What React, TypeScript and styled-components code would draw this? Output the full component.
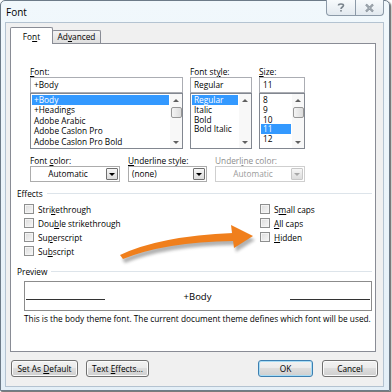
import React from 'react';
import styled, { createGlobalStyle } from 'styled-components';

const Global = createGlobalStyle`
  html, body { margin: 0; padding: 0; background: #fff; }
  body { font-family: "Open Sans", "Noto Sans", sans-serif; font-size: 8.3px; color: #000; }
  * { box-sizing: border-box; }
`;

const Stage = styled.div`
  position: relative;
  width: 392px;
  height: 392px;
  background: #fff;
  overflow: hidden;
`;

const Window = styled.div`
  width: 390px;
  height: 391px;
  border: 1px solid #6d7b88;
  border-radius: 5px 5px 0 0;
  background: linear-gradient(180deg, #f1f8fc 0%, #e4eff7 100%);
  box-shadow: 1px 1px 1px rgba(0, 0, 0, 0.45), 2px 2px 2px rgba(0, 0, 0, 0.2);
  padding: 0 5px 3px 4px;
  display: flex;
  flex-direction: column;
`;

const TitleBar = styled.div`
  height: 21px;
  display: flex;
  align-items: flex-start;
  justify-content: space-between;
`;

const Title = styled.div`
  font-size: 10px;
  line-height: 23px;
  padding-left: 1px;
`;

const Caption = styled.div`
  display: flex;
  margin-top: -1px;
  height: 16px;
  border: 1px solid #8c9aa8;
  border-top: none;
  border-radius: 0 0 4px 4px;
  overflow: hidden;
  background: linear-gradient(180deg, #f7fafc, #e2e9ef);
`;

const CapBtn = styled.div<{ $sep?: boolean }>`
  width: 28px;
  display: flex;
  align-items: center;
  justify-content: center;
  border-left: ${(p) => (p.$sep ? '1px solid #8c9aa8' : 'none')};
`;

const Client = styled.div`
  flex: 1;
  border: 1px solid #b4c3d1;
  background: #f0f0f0;
  padding: 4px 6px 0 4px;
  display: flex;
  flex-direction: column;
`;

const TabStrip = styled.div`
  display: flex;
  align-items: flex-end;
  height: 16px;
  position: relative;
  z-index: 1;
`;

const Tab = styled.div<{ $active?: boolean; $w: number }>`
  width: ${(p) => p.$w}px;
  height: ${(p) => (p.$active ? 17 : 13)}px;
  margin-bottom: ${(p) => (p.$active ? -1 : 0)}px;
  margin-left: ${(p) => (p.$active ? 0 : -1)}px;
  border: 1px solid #898c95;
  border-bottom: none;
  border-radius: 2px 2px 0 0;
  background: ${(p) => (p.$active ? '#fff' : 'linear-gradient(180deg, #f3f3f3, #dedede)')};
  text-align: center;
  line-height: ${(p) => (p.$active ? 17 : 12)}px;
`;

const Panel = styled.div`
  width: 366px;
  height: 309px;
  background: #fff;
  border: 1px solid #898c95;
  padding-top: 22px;
  display: flex;
  flex-direction: column;
`;

const Key = styled.span`
  text-decoration: underline;
  text-underline-offset: 1px;
`;

const SelectorGrid = styled.div<{ $cols: string; $gap: number; $top?: number }>`
  display: grid;
  grid-template-columns: ${(p) => p.$cols};
  column-gap: ${(p) => p.$gap}px;
  margin: ${(p) => p.$top ?? 0}px 0 0 19px;
`;

const Field = styled.div`
  display: flex;
  flex-direction: column;
`;

const Label = styled.div<{ $disabled?: boolean }>`
  height: 11px;
  line-height: 11px;
  white-space: nowrap;
  color: ${(p) => (p.$disabled ? '#8d8d8d' : '#000')};
`;

const TextBox = styled.div`
  height: 16px;
  border: 1px solid #abadb3;
  background: #fff;
  padding-left: 3px;
  line-height: 14px;
`;

const ListBox = styled.div`
  height: 56px;
  border: 1px solid #828790;
  background: #fff;
  display: flex;
`;

const Items = styled.div`
  flex: 1;
  padding: 1px 1px 0 1px;
  overflow: hidden;
`;

const Item = styled.div<{ $sel?: boolean; $h: number }>`
  height: ${(p) => p.$h}px;
  line-height: ${(p) => p.$h}px;
  padding-left: 2px;
  white-space: nowrap;
  background: ${(p) => (p.$sel ? '#3399ff' : 'transparent')};
  color: ${(p) => (p.$sel ? '#fff' : '#000')};
`;

const ScrollBar = styled.div`
  width: 12px;
  display: flex;
  flex-direction: column;
  align-items: center;
  background: #f8f8f8;
`;

const ArrowCell = styled.div`
  height: 12px;
  width: 12px;
  display: flex;
  align-items: center;
  justify-content: center;
`;

const Spacer = styled.div`
  flex: 1;
`;

const Tri = styled.span<{ $down?: boolean; $color?: string }>`
  width: 0;
  height: 0;
  border-left: 3px solid transparent;
  border-right: 3px solid transparent;
  ${(p) =>
    p.$down
      ? `border-top: 3px solid ${p.$color ?? '#606060'};`
      : `border-bottom: 3px solid ${p.$color ?? '#606060'};`}
`;

const Thumb = styled.div`
  width: 11px;
  height: 11px;
  margin-top: 1px;
  border: 1px solid #979797;
  border-radius: 2px;
  background: linear-gradient(90deg, #f4f4f4, #dcdcdc);
`;

const Combo = styled.div<{ $disabled?: boolean }>`
  height: 16px;
  border: 1px solid ${(p) => (p.$disabled ? '#cfcfcf' : '#acacac')};
  background: #fff;
  display: flex;
  color: ${(p) => (p.$disabled ? '#9a9a9a' : '#000')};
`;

const ComboText = styled.div<{ $center?: boolean }>`
  flex: 1;
  line-height: 14px;
  text-align: ${(p) => (p.$center ? 'center' : 'left')};
  padding-left: ${(p) => (p.$center ? 0 : 3)}px;
`;

const ComboBtn = styled.div<{ $disabled?: boolean }>`
  width: 12px;
  margin: 1px;
  border: 1px solid ${(p) => (p.$disabled ? '#c8c8c8' : '#707070')};
  border-radius: 1px;
  background: linear-gradient(180deg, #f6f6f6, #dcdcdc);
  display: flex;
  align-items: center;
  justify-content: center;
`;

const GroupHeader = styled.div<{ $top: number }>`
  display: flex;
  align-items: center;
  gap: 4px;
  height: 11px;
  line-height: 11px;
  margin: ${(p) => p.$top}px 3px 0 6px;
`;

const GroupLine = styled.div`
  flex: 1;
  height: 1px;
  background: #dde4ea;
`;

const EffectsGrid = styled.div`
  display: grid;
  grid-template-columns: 236px auto;
  grid-template-rows: repeat(4, 14px);
  grid-auto-flow: column;
  margin: 3px 0 0 13px;
`;

const Check = styled.div`
  display: flex;
  align-items: center;
  gap: 4px;
  white-space: nowrap;
`;

const Box = styled.span`
  width: 10px;
  height: 10px;
  border: 1px solid #8e8f8f;
  background: linear-gradient(135deg, #dcdcdc, #f7f7f7);
  box-shadow: inset 0 0 0 1px #f4f4f4;
`;

const PreviewBox = styled.div`
  margin: 4px 0 0 13px;
  width: 348px;
  height: 30px;
  border: 1px solid #8c8c8c;
  display: grid;
  grid-template-columns: 79px 1fr 80px;
  align-items: center;
  padding: 0 1px;
`;

const PreviewLine = styled.div`
  height: 1px;
  background: #333;
  margin-top: 7px;
`;

const PreviewText = styled.div`
  text-align: center;
  font-size: 9.5px;
`;

const Note = styled.div`
  margin: 2px 0 0 13px;
  height: 11px;
  line-height: 11px;
  white-space: nowrap;
`;

const ButtonRow = styled.div`
  display: flex;
  margin: 8px -1px 0 1px;
`;

const Group = styled.div<{ $gap: number }>`
  display: flex;
  gap: ${(p) => p.$gap}px;
`;

const Button = styled.div<{ $w: number; $def?: boolean }>`
  width: ${(p) => p.$w}px;
  height: 17px;
  border: 1px solid ${(p) => (p.$def ? '#3c7fb1' : '#707070')};
  border-radius: 3px;
  background: linear-gradient(180deg, #f2f2f2 0%, #ebebeb 45%, #dddddd 50%, #cfcfcf 100%);
  box-shadow: inset 0 0 0 1px ${(p) => (p.$def ? '#a8dcf5' : '#fbfbfb')};
  text-align: center;
  line-height: 15px;
  white-space: nowrap;
`;

const Overlay = styled.svg`
  position: absolute;
  left: 0;
  top: 0;
  pointer-events: none;
`;

function Scroll({ thumb }: { thumb?: boolean }) {
  return (
    <ScrollBar>
      <ArrowCell>
        <Tri />
      </ArrowCell>
      {thumb && <Thumb />}
      <Spacer />
      <ArrowCell>
        <Tri $down />
      </ArrowCell>
    </ScrollBar>
  );
}

function ListField({
  label,
  value,
  items,
  sel,
  h,
  thumb,
}: {
  label: React.ReactNode;
  value: string;
  items: string[];
  sel: number;
  h: number;
  thumb?: boolean;
}) {
  return (
    <Field>
      <Label>{label}</Label>
      <TextBox>{value}</TextBox>
      <ListBox>
        <Items>
          {items.map((it, i) => (
            <Item key={it} $h={h} $sel={i === sel}>
              {it}
            </Item>
          ))}
        </Items>
        <Scroll thumb={thumb} />
      </ListBox>
    </Field>
  );
}

function ComboField({
  label,
  value,
  center,
  disabled,
}: {
  label: React.ReactNode;
  value: string;
  center?: boolean;
  disabled?: boolean;
}) {
  return (
    <Field>
      <Label $disabled={disabled}>{label}</Label>
      <Combo $disabled={disabled}>
        <ComboText $center={center}>{value}</ComboText>
        <ComboBtn $disabled={disabled}>
          <Tri $down $color={disabled ? '#a8a8a8' : '#000'} />
        </ComboBtn>
      </Combo>
    </Field>
  );
}

export default function App() {
  return (
    <Stage>
      <Global />
      <Window>
        <TitleBar>
          <Title>Font</Title>
          <Caption>
            <CapBtn>
              <svg width="10" height="11" viewBox="0 0 10 11">
                <path
                  d="M2.5 3.5 C2.5 1.5 7.5 1.5 7.5 3.5 C7.5 5 5 5 5 7"
                  fill="none"
                  stroke="#7a848d"
                  strokeWidth="1.6"
                />
                <rect x="4.2" y="8" width="1.6" height="1.6" fill="#7a848d" />
              </svg>
            </CapBtn>
            <CapBtn $sep>
              <svg width="11" height="10" viewBox="0 0 11 10">
                <path d="M2 1.5 L9 8.5 M9 1.5 L2 8.5" stroke="#7a848d" strokeWidth="2.2" />
                <path d="M2 1.5 L9 8.5 M9 1.5 L2 8.5" stroke="#e9eef2" strokeWidth="0.6" />
              </svg>
            </CapBtn>
          </Caption>
        </TitleBar>
        <Client>
          <TabStrip>
            <Tab $active $w={43}>
              Fo<Key>n</Key>t
            </Tab>
            <Tab $w={49}>
              Ad<Key>v</Key>anced
            </Tab>
          </TabStrip>
          <Panel>
            <SelectorGrid $cols="153px 62px 46px" $gap={7}>
              <ListField
                label={
                  <>
                    <Key>F</Key>ont:
                  </>
                }
                value="+Body"
                items={['+Body', '+Headings', 'Adobe Arabic', 'Adobe Caslon Pro', 'Adobe Caslon Pro Bold']}
                sel={0}
                h={10.4}
                thumb
              />
              <ListField
                label={
                  <>
                    Font st<Key>y</Key>le:
                  </>
                }
                value="Regular"
                items={['Regular', 'Italic', 'Bold', 'Bold Italic']}
                sel={0}
                h={9.8}
              />
              <ListField
                label={
                  <>
                    <Key>S</Key>ize:
                  </>
                }
                value="11"
                items={['8', '9', '10', '11', '12']}
                sel={3}
                h={9.8}
                thumb
              />
            </SelectorGrid>
            <SelectorGrid $cols="90px 79px 90px" $gap={8} $top={6}>
              <ComboField
                label={
                  <>
                    Font <Key>c</Key>olor:
                  </>
                }
                value="Automatic"
                center
              />
              <ComboField
                label={
                  <>
                    <Key>U</Key>nderline style:
                  </>
                }
                value="(none)"
              />
              <ComboField
                label={
                  <>
                    Underl<Key>i</Key>ne color:
                  </>
                }
                value="Automatic"
                center
                disabled
              />
            </SelectorGrid>
            <GroupHeader $top={6}>
              Effects
              <GroupLine />
            </GroupHeader>
            <EffectsGrid>
              <Check>
                <Box />
                <span>
                  Stri<Key>k</Key>ethrough
                </span>
              </Check>
              <Check>
                <Box />
                <span>
                  Dou<Key>b</Key>le strikethrough
                </span>
              </Check>
              <Check>
                <Box />
                <span>
                  Su<Key>p</Key>erscript
                </span>
              </Check>
              <Check>
                <Box />
                <span>
                  Su<Key>b</Key>script
                </span>
              </Check>
              <Check>
                <Box />
                <span>
                  S<Key>m</Key>all caps
                </span>
              </Check>
              <Check>
                <Box />
                <span>
                  <Key>A</Key>ll caps
                </span>
              </Check>
              <Check>
                <Box />
                <span>
                  <Key>H</Key>idden
                </span>
              </Check>
            </EffectsGrid>
            <GroupHeader $top={8}>
              Preview
              <GroupLine />
            </GroupHeader>
            <PreviewBox>
              <PreviewLine />
              <PreviewText>+Body</PreviewText>
              <PreviewLine />
            </PreviewBox>
            <Note>This is the body theme font. The current document theme defines which font will be used.</Note>
          </Panel>
          <ButtonRow>
            <Group $gap={8}>
              <Button $w={67}>
                Set As <Key>D</Key>efault
              </Button>
              <Button $w={63}>
                Text <Key>E</Key>ffects...
              </Button>
            </Group>
            <Spacer />
            <Group $gap={9}>
              <Button $w={55} $def>
                OK
              </Button>
              <Button $w={56}>Cancel</Button>
            </Group>
          </ButtonRow>
        </Client>
      </Window>
      <Overlay width={392} height={392} viewBox="0 0 392 392">
        <defs>
          <filter id="sh" x="-20%" y="-50%" width="140%" height="200%">
            <feGaussianBlur stdDeviation="1.6" />
          </filter>
        </defs>
        <g transform="translate(2 4)" opacity="0.45" filter="url(#sh)" fill="#555">
          <path d="M120 255 Q160 236 233 233 L233 241 Q165 242 123 259 Z" />
          <path d="M231 225 L253 236 L234 248 Z" />
        </g>
        <g fill="#f07f1c">
          <path d="M120 255 Q160 236 233 233 L233 241 Q165 242 123 259 Z" />
          <path d="M231 225 L253 236 L234 248 Z" />
        </g>
      </Overlay>
    </Stage>
  );
}
